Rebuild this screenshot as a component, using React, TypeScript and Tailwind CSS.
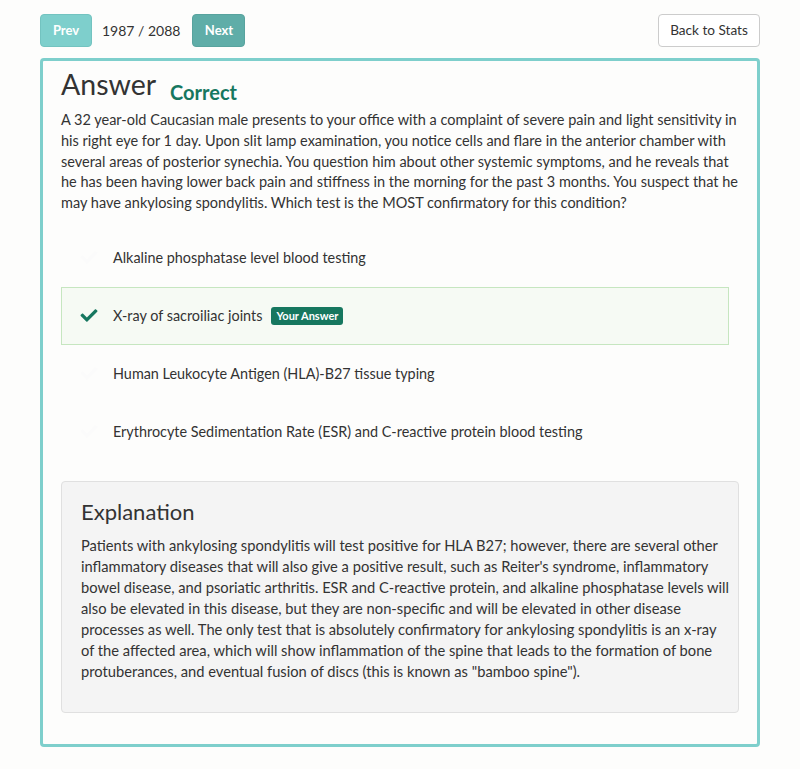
import React from "react";
import { FaCheck } from "react-icons/fa";

const options = [
  { text: "Alkaline phosphatase level blood testing", selected: false },
  { text: "X-ray of sacroiliac joints", selected: true },
  { text: "Human Leukocyte Antigen (HLA)-B27 tissue typing", selected: false },
  { text: "Erythrocyte Sedimentation Rate (ESR) and C-reactive protein blood testing", selected: false },
];

export default function App() {
  return (
    <div
      className="min-h-[769px] bg-[#fdfdfc] text-[#333] px-[40px] pt-[14px] pb-[24px]"
      style={{ fontFamily: "Lato, 'Noto Sans', sans-serif" }}
    >
      <div className="flex items-center justify-between h-[33px]">
        <div className="flex items-center">
          <button className="h-[33px] w-[52px] rounded-[4px] bg-[#7ecfcc] border border-[#73c3c0] text-white font-bold text-[13px]">
            Prev
          </button>
          <span className="ml-[10px] text-[14px] text-[#333]">1987 / 2088</span>
          <button className="ml-[12px] h-[33px] w-[53px] rounded-[4px] bg-[#5fada8] border border-[#58a39e] text-white font-bold text-[13px]">
            Next
          </button>
        </div>
        <button className="h-[33px] w-[102px] rounded-[4px] bg-white border border-[#cccccc] text-[#333] text-[13.6px]">
          Back to Stats
        </button>
      </div>

      <div className="mt-[11px] border-[3px] border-[#7ecfcc] rounded-[4px] bg-[#fdfdfc] px-[18px] pt-[7px] pb-[31px]">
        <h1 className="text-[28.5px] leading-[33px] font-normal text-[#333]">
          Answer
          <span className="ml-[14px] text-[20px] font-bold text-[#16775f] align-[-5px]">Correct</span>
        </h1>
        <p className="mt-[1px] text-[14.5px] leading-[20.75px] text-[#333]">
          A 32 year-old Caucasian male presents to your office with a complaint of severe pain and light sensitivity in
          his right eye for 1 day. Upon slit lamp examination, you notice cells and flare in the anterior chamber with
          several areas of posterior synechia. You question him about other systemic symptoms, and he reveals that he
          has been having lower back pain and stiffness in the morning for the past 3 months. You suspect that he may
          have ankylosing spondylitis. Which test is the MOST confirmatory for this condition?
        </p>

        <div className="mt-[15px] mr-[10px]">
          {options.map((o, i) => (
            <div
              key={i}
              className={
                "h-[58px] flex items-center text-[14.4px] " +
                (o.selected ? "bg-[#f6faf4] border border-[#c6e6c0]" : "border border-transparent")
              }
            >
              <div className="w-[51px] pl-[17px] flex items-center">
                <FaCheck className={"w-[20px] h-[17px] " + (o.selected ? "text-[#16775f]" : "text-[#fbfbfb]")} />
              </div>
              <span>{o.text}</span>
              {o.selected && (
                <span className="ml-[9px] h-[18px] px-[5px] rounded-[3px] bg-[#16775f] text-white text-[11px] font-bold leading-[18px]">
                  Your Answer
                </span>
              )}
            </div>
          ))}
        </div>

        <div className="mt-[20px] bg-[#f4f4f4] border border-[#e0e0e0] rounded-[4px] pl-[19px] pr-[7px] pt-[17px] pb-[30px]">
          <h2 className="text-[22px] leading-[26px] font-normal text-[#333]">Explanation</h2>
          <p className="mt-[10px] text-[14.7px] leading-[21px] text-[#333]">
            Patients with ankylosing spondylitis will test positive for HLA B27; however, there are several other
            inflammatory diseases that will also give a positive result, such as Reiter's syndrome, inflammatory bowel
            disease, and psoriatic arthritis. ESR and C-reactive protein, and alkaline phosphatase levels will also be
            elevated in this disease, but they are non-specific and will be elevated in other disease processes as well.
            The only test that is absolutely confirmatory for ankylosing spondylitis is an x-ray of the affected area,
            which will show inflammation of the spine that leads to the formation of bone protuberances, and eventual
            fusion of discs (this is known as "bamboo spine").
          </p>
        </div>
      </div>
    </div>
  );
}
